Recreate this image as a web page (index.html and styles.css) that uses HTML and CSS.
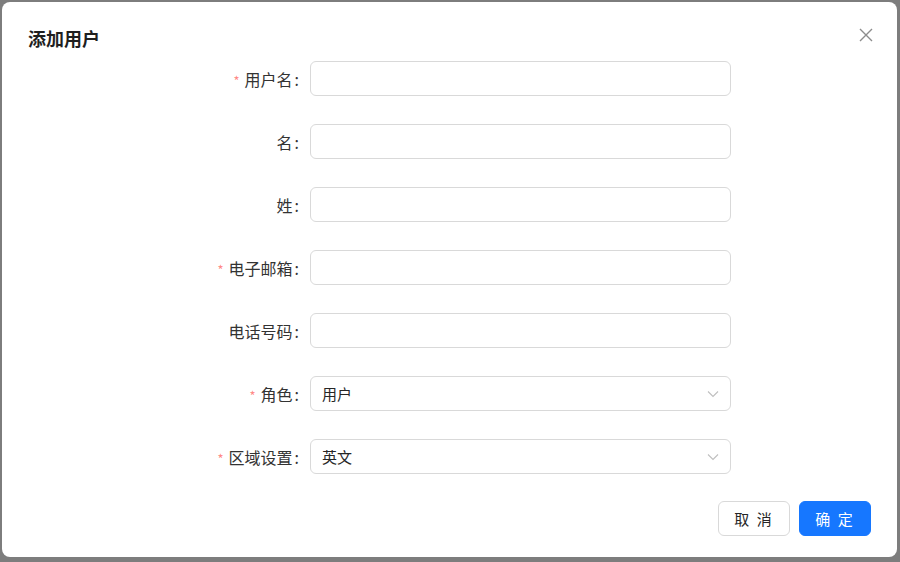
FILE: index.html
```html
<!DOCTYPE html>
<html lang="zh-CN">
<head>
  <meta charset="UTF-8" />
  <title>添加用户</title>
  <link rel="stylesheet" href="styles.css">
</head>
<body>

  <!-- Modal -->
  <div class="modal">
    <div class="modal-header">
      <h2 class="modal-title">添加用户</h2>
      <button class="modal-close" aria-label="关闭">
        <svg width="14" height="14" viewBox="0 0 14 14"><path d="M1 1L13 13M13 1L1 13" stroke="#8c8c8c" stroke-width="1.4" fill="none"/></svg>
      </button>
    </div>

    <form class="user-form">
      <div class="form-row">
        <label class="required">用户名</label>
        <input type="text" class="field">
      </div>
      <div class="form-row">
        <label>名</label>
        <input type="text" class="field">
      </div>
      <div class="form-row">
        <label>姓</label>
        <input type="text" class="field">
      </div>
      <div class="form-row">
        <label class="required">电子邮箱</label>
        <input type="email" class="field">
      </div>
      <div class="form-row">
        <label>电话号码</label>
        <input type="text" class="field">
      </div>
      <div class="form-row">
        <label class="required">角色</label>
        <div class="field select">
          <span>用户</span>
          <svg width="12" height="8" viewBox="0 0 12 8"><path d="M1 1.5L6 6.5L11 1.5" stroke="#bfbfbf" stroke-width="1.1" fill="none"/></svg>
        </div>
      </div>
      <div class="form-row">
        <label class="required">区域设置</label>
        <div class="field select">
          <span>英文</span>
          <svg width="12" height="8" viewBox="0 0 12 8"><path d="M1 1.5L6 6.5L11 1.5" stroke="#bfbfbf" stroke-width="1.1" fill="none"/></svg>
        </div>
      </div>
    </form>

    <div class="modal-footer">
      <button class="btn">取 消</button>
      <button class="btn btn-primary">确 定</button>
    </div>
  </div>

</body>
</html>
```

FILE: styles.css
```css
/* Reset & Base */
* {
  margin: 0;
  padding: 0;
  box-sizing: border-box;
}

html, body {
  width: 900px;
  height: 562px;
  overflow: hidden;
}

body {
  font-family: "Noto Sans CJK SC", "Noto Sans", sans-serif;
  background-color: #7d7d7d;
  color: rgba(0, 0, 0, 0.88);
  padding: 2px 3px 5px 2px;
}

.modal {
  height: 100%;
  background-color: #ffffff;
  border-radius: 8px;
  padding: 0 26px;
}

.modal-header {
  display: flex;
  justify-content: space-between;
  align-items: center;
  height: 59px;
  padding-top: 12px;
}

.modal-title {
  font-size: 18px;
  font-weight: 600;
  color: #1f1f1f;
}

.modal-close {
  border: none;
  background: none;
  display: flex;
  margin-right: -2px;
  margin-top: -6px;
}

.user-form {
  display: flex;
  flex-direction: column;
  gap: 28px;
}

.form-row {
  display: flex;
  align-items: center;
  height: 35px;
}

.form-row label {
  width: 282px;
  text-align: right;
  font-size: 16px;
  padding-right: 11px;
  color: #333;
}

.form-row label::after {
  content: ":";
  margin-left: 2px;
}

.form-row label.required::before {
  content: "*";
  color: #ff8a87;
  margin-right: 5px;
  font-size: 13px;
}

.field {
  width: 421px;
  height: 35px;
  border: 1px solid #d9d9d9;
  border-radius: 6px;
  font-family: inherit;
  font-size: 15px;
  padding: 0 11px;
  background: #fff;
}

.select {
  display: flex;
  align-items: center;
  justify-content: space-between;
  color: #262626;
}

.modal-footer {
  display: flex;
  justify-content: flex-end;
  gap: 9px;
  margin-top: 27px;
}

.btn {
  width: 72px;
  height: 35px;
  border: 1px solid #d9d9d9;
  border-radius: 6px;
  background: #ffffff;
  font-family: inherit;
  font-size: 15px;
  color: #262626;
  letter-spacing: 2px;
}

.btn-primary {
  background-color: #1677ff;
  border-color: #1677ff;
  color: #ffffff;
}
```
